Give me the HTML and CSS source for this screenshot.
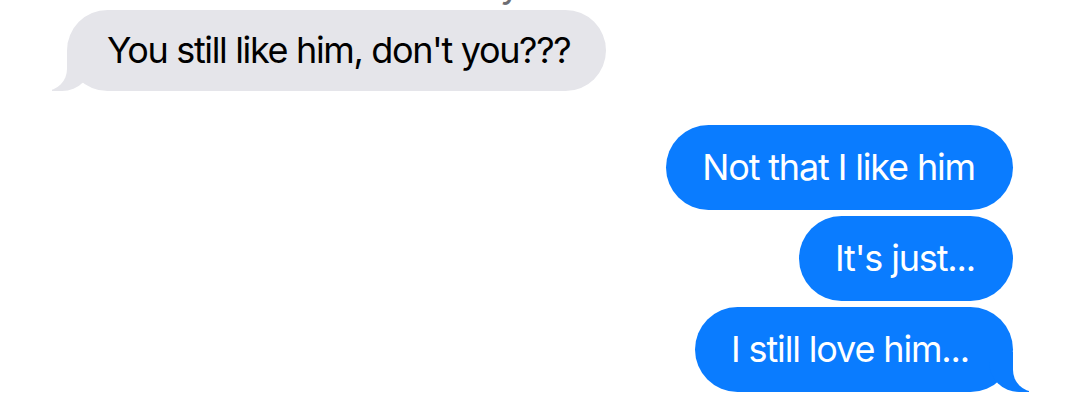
FILE: index.html
```html
<!DOCTYPE html>
<html lang="en">
<head>
<meta charset="utf-8">
<title>Messages</title>
<link rel="stylesheet" href="styles.css">
</head>
<body>
<div class="thread">
  <div class="prev-line"><span class="prev-text">y</span></div>
  <div class="row row-them">
    <div class="bubble them tail">You still like him, don't you???</div>
  </div>
  <div class="group-me">
    <div class="row row-me">
      <div class="bubble me">Not that I like him</div>
    </div>
    <div class="row row-me">
      <div class="bubble me">It's just...</div>
    </div>
    <div class="row row-me">
      <div class="bubble me tail">I still love him...</div>
    </div>
  </div>
</div>
</body>
</html>
```

FILE: styles.css
```css
html, body {
  margin: 0;
  padding: 0;
  background: #ffffff;
}

body {
  font-family: "Inter", "Roboto", "Liberation Sans", sans-serif;
  width: 1079px;
  height: 401px;
  overflow: hidden;
}

.thread {
  display: flex;
  flex-direction: column;
  padding: 0 66px 0 67px;
}

.prev-line {
  height: 10px;
  overflow: hidden;
  padding-left: 433px;
}

.prev-text {
  display: block;
  font-size: 37px;
  line-height: 40px;
  margin-top: -36px;
  color: #6d6d72;
}

.row {
  display: flex;
}

.row-me {
  justify-content: flex-end;
}

.group-me {
  display: flex;
  flex-direction: column;
  gap: 6px;
  margin-top: 34px;
}

.bubble {
  position: relative;
  font-size: 36px;
  letter-spacing: -1.15px;
  white-space: nowrap;
}

.them {
  background: #e5e5ea;
  color: #000000;
  height: 81px;
  line-height: 81px;
  border-radius: 40.5px;
  padding: 0 36px 0 40px;
  letter-spacing: -1.35px;
}

.me {
  background: #0a7cff;
  color: #ffffff;
  height: 85px;
  line-height: 85px;
  border-radius: 42.5px;
  padding: 0 38px 0 36px;
}

.me.tail {
  padding-right: 44px;
}

.them.tail::before {
  content: "";
  position: absolute;
  bottom: 0;
  left: -15px;
  width: 40px;
  height: 40px;
  background: #e5e5ea;
  border-bottom-right-radius: 30px;
}

.them.tail::after {
  content: "";
  position: absolute;
  bottom: 0;
  left: -22px;
  width: 22px;
  height: 40px;
  background: #ffffff;
  border-bottom-right-radius: 22px;
}

.me.tail::before {
  content: "";
  position: absolute;
  bottom: 0;
  right: -16px;
  width: 40px;
  height: 40px;
  background: #0a7cff;
  border-bottom-left-radius: 30px;
}

.me.tail::after {
  content: "";
  position: absolute;
  bottom: 0;
  right: -22px;
  width: 22px;
  height: 40px;
  background: #ffffff;
  border-bottom-left-radius: 22px;
}
```
